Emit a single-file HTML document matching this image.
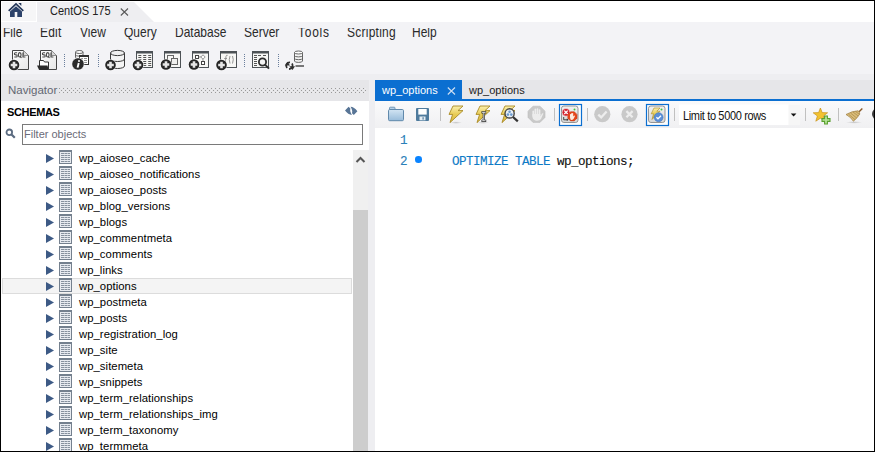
<!DOCTYPE html>
<html><head><meta charset="utf-8">
<style>
*{box-sizing:border-box;margin:0;padding:0}
html,body{width:875px;height:452px;overflow:hidden;background:#fff}
body{position:relative;font-family:"Liberation Sans",sans-serif}
.a{position:absolute}
.mn{position:absolute;top:-2px;font-size:12px;color:#2a2a2a;line-height:14px;transform:scaleY(1.2);transform-origin:0 11px}
.tt{font-size:11.3px;color:#000;white-space:nowrap;line-height:16px;letter-spacing:0.05px}
.mono{font-family:"Liberation Mono",monospace;font-size:12.6px;letter-spacing:-0.56px;line-height:14px;white-space:pre;-webkit-text-stroke:0.12px currentColor}
</style></head><body>
<!-- ===== top tab bar ===== -->
<div class="a" style="left:2px;top:2px;width:34px;height:19px;background:#f6f6f7"></div>
<svg class="a" style="left:0;top:0" width="40" height="21"><path d="M8.7,10.9 L16,3.9 L23.3,10.9" stroke="#233659" stroke-width="1.7" fill="none"/><polygon points="18.4,3.1 21.3,3.1 21.3,6" fill="#233659"/><polygon points="10,11.4 16,6.2 22,11.4 22,16.9 17.3,16.9 17.3,12.1 14.7,12.1 14.7,16.9 10,16.9" fill="#2c4269"/></svg>
<svg class="a" style="left:37px;top:2px" width="120" height="20"><polygon points="0,0 97,0 117,20 0,20" fill="#eeeef1"/></svg>
<div class="a" style="left:50px;top:4px;font-size:11px;color:#222;line-height:13px;transform:scaleY(1.1);transform-origin:0 0">CentOS 175</div>
<svg class="a" style="left:120px;top:8px" width="9" height="8"><path d="M0.8,0.5 L8,7.5 M8,0.5 L0.8,7.5" stroke="#5a5a5a" stroke-width="1.1"/></svg>

<!-- ===== menu + toolbar ===== -->
<div class="a" style="left:1px;top:22px;width:873px;height:52px;background:#f3f3f6"></div>
<div class="a" style="left:1px;top:74px;width:873px;height:6px;background:#eeeef1"></div>
<div class="a" style="left:0;top:28px;width:460px;height:14px;overflow:hidden"><span class="mn" style="left:3px">File</span><span class="mn" style="left:40px;letter-spacing:0.2px">Edit</span><span class="mn" style="left:80px">View</span><span class="mn" style="left:124px">Query</span><span class="mn" style="left:175px">Database</span><span class="mn" style="left:244px">Server</span><span class="mn" style="left:298px;letter-spacing:0.75px">Tools</span><span class="mn" style="left:347px;letter-spacing:0.25px">Scripting</span><span class="mn" style="left:412px">Help</span></div>

<svg class="a" style="left:0;top:40px" width="320" height="36" viewBox="0 40 320 36">
<defs>
<linearGradient id="docg" x1="0" y1="0" x2="1" y2="1"><stop offset="0" stop-color="#ffffff"/><stop offset="1" stop-color="#e6e6e6"/></linearGradient>
<g id="plus"><circle cx="0" cy="0" r="6" fill="#fff" opacity="0.6"/><circle cx="0" cy="0" r="5.3" fill="#262626"/><path d="M-3.3,0 H3.3 M0,-3.3 V3.3" stroke="#e6e6e6" stroke-width="2.6"/></g>
<g id="frame"><rect x="0.5" y="0.5" width="16" height="16" fill="#f7f7f5" stroke="#4d5256" stroke-width="1"/><rect x="0" y="0" width="17" height="2.5" fill="#4d5256"/></g>
</defs>
<!-- 1 new sql -->
<path d="M12.5,50.5 H23.5 L28.5,55.5 V69.5 H12.5 Z" fill="url(#docg)" stroke="#454545"/>
<path d="M23.5,50.5 V55.5 H28.5" fill="#d8d8d8" stroke="#777" stroke-width="0.8"/>
<g transform="translate(0,0)" fill="none" stroke="#4a4a4a" stroke-width="1.15"><path d="M17.1,52.7 H15.3 Q14.4,52.7 14.4,53.7 Q14.4,54.7 15.4,54.8 H16.2 Q17.2,54.9 17.2,55.9 Q17.2,57 16.2,57 H14.3"/><ellipse cx="19.7" cy="54.85" rx="1.35" ry="2.15"/><path d="M20.2,56.6 L21.5,57.8"/><path d="M23,52.4 V57 H25.4"/></g>
<use href="#plus" x="14" y="65"/>
<!-- 2 open sql -->
<path d="M40.5,50.5 H51.5 L56.5,55.5 V69.5 H40.5 Z" fill="url(#docg)" stroke="#454545"/>
<path d="M51.5,50.5 V55.5 H56.5" fill="#d8d8d8" stroke="#777" stroke-width="0.8"/>
<g transform="translate(28,0)" fill="none" stroke="#4a4a4a" stroke-width="1.15"><path d="M17.1,52.7 H15.3 Q14.4,52.7 14.4,53.7 Q14.4,54.7 15.4,54.8 H16.2 Q17.2,54.9 17.2,55.9 Q17.2,57 16.2,57 H14.3"/><ellipse cx="19.7" cy="54.85" rx="1.35" ry="2.15"/><path d="M20.2,56.6 L21.5,57.8"/><path d="M23,52.4 V57 H25.4"/></g>
<path d="M39.5,69.5 V60.5 H43.5 L44.5,62 H48.5 V69.5 Z" fill="#fff" stroke="#333"/>
<path d="M37,65.5 H47.5 L48.5,69.8 H39 Z" fill="#2a2a2a"/>
<!-- sep -->
<g fill="#6a7f9c"><rect x="64" y="54" width="1" height="1"/><rect x="64" y="56" width="1" height="1"/><rect x="64" y="58" width="1" height="1"/><rect x="64" y="60" width="1" height="1"/><rect x="64" y="62" width="1" height="1"/><rect x="64" y="64" width="1" height="1"/><rect x="64" y="66" width="1" height="1"/>
<rect x="98" y="54" width="1" height="1"/><rect x="98" y="56" width="1" height="1"/><rect x="98" y="58" width="1" height="1"/><rect x="98" y="60" width="1" height="1"/><rect x="98" y="62" width="1" height="1"/><rect x="98" y="64" width="1" height="1"/><rect x="98" y="66" width="1" height="1"/>
<rect x="244" y="54" width="1" height="1"/><rect x="244" y="56" width="1" height="1"/><rect x="244" y="58" width="1" height="1"/><rect x="244" y="60" width="1" height="1"/><rect x="244" y="62" width="1" height="1"/><rect x="244" y="64" width="1" height="1"/><rect x="244" y="66" width="1" height="1"/>
<rect x="278" y="54" width="1" height="1"/><rect x="278" y="56" width="1" height="1"/><rect x="278" y="58" width="1" height="1"/><rect x="278" y="60" width="1" height="1"/><rect x="278" y="62" width="1" height="1"/><rect x="278" y="64" width="1" height="1"/><rect x="278" y="66" width="1" height="1"/></g>
<!-- 3 info -->
<path d="M75.5,52 V57.5 A3.8,1.4 0 0 0 83,57.5 V52" fill="#fafafa" stroke="#555" stroke-width="0.9"/>
<ellipse cx="79.3" cy="52" rx="3.8" ry="1.5" fill="#fff" stroke="#555" stroke-width="0.9"/>
<path d="M75.5,55 A3.8,1.4 0 0 0 83,55" fill="none" stroke="#555" stroke-width="0.9"/>
<rect x="79.5" y="55.5" width="9" height="9" fill="#fff" stroke="#333"/>
<rect x="79.5" y="55.5" width="9" height="1.5" fill="#333"/>
<g fill="#777"><rect x="81" y="58" width="2" height="0.8"/><rect x="84" y="58" width="3" height="0.8"/><rect x="81" y="60" width="2" height="0.8"/><rect x="84" y="60" width="3" height="0.8"/><rect x="84" y="62" width="3" height="0.8"/></g>
<circle cx="78" cy="64" r="6.1" fill="#2b2b2b" stroke="#fff" stroke-width="0.5"/>
<circle cx="79" cy="60.9" r="1" fill="#fff"/><path d="M78.7,63 L77.6,67.6" stroke="#fff" stroke-width="1.9"/>
<!-- 4 db plus -->
<path d="M110.5,53 V66 A7,2.5 0 0 0 124.5,66 V53" fill="#f4f4f4" stroke="#3a3a3a" stroke-width="1"/>
<ellipse cx="117.5" cy="53" rx="7" ry="2.6" fill="#f0f0f0" stroke="#3a3a3a" stroke-width="1"/>
<path d="M110.5,59 A7,2.5 0 0 0 124.5,59" fill="none" stroke="#3a3a3a" stroke-width="1"/>
<path d="M110.5,62.5 H124.5" fill="none" stroke="#3a3a3a" stroke-width="0"/>
<use href="#plus" x="110.5" y="65"/>
<!-- 5 table plus -->
<use href="#frame" x="136" y="51"/>
<g fill="#555"><rect x="138.3" y="55" width="3" height="1"/><rect x="143.2" y="55" width="3" height="1"/><rect x="148.2" y="55" width="3" height="1"/><rect x="138.3" y="57" width="3" height="1"/><rect x="143.2" y="57" width="3" height="1"/><rect x="148.2" y="57" width="3" height="1"/><rect x="138.3" y="59" width="3" height="1"/><rect x="143.2" y="59" width="3" height="1"/><rect x="148.2" y="59" width="3" height="1"/><rect x="143.2" y="61" width="3" height="1"/><rect x="148.2" y="61" width="3" height="1"/><rect x="143.2" y="63" width="3" height="1"/><rect x="148.2" y="63" width="3" height="1"/><rect x="143.2" y="65" width="3" height="1"/><rect x="148.2" y="65" width="3" height="1"/></g>
<use href="#plus" x="138" y="65"/>
<!-- 6 view plus -->
<use href="#frame" x="164" y="51"/>
<rect x="167.5" y="55.5" width="6" height="6" fill="none" stroke="#666" stroke-width="1"/>
<rect x="171.5" y="58.5" width="6" height="6" fill="#f0f0ee" stroke="#666" stroke-width="1"/>
<use href="#plus" x="166" y="64.5"/>
<!-- 7 routine plus -->
<use href="#frame" x="192" y="51"/>
<rect x="195.5" y="55.5" width="3" height="3" fill="#fff" stroke="#444" stroke-width="1"/>
<path d="M198.5,57 H201" stroke="#777" stroke-width="0.8"/>
<path d="M203,54.8 L205.2,57 L203,59.2 L200.8,57 Z" fill="#fff" stroke="#777" stroke-width="0.8"/>
<path d="M203,59.2 V61" stroke="#777" stroke-width="0.8"/>
<rect x="201.5" y="61.5" width="3" height="3" fill="#fff" stroke="#444" stroke-width="1"/>
<use href="#plus" x="194" y="64.5"/>
<!-- 8 function plus -->
<use href="#frame" x="220" y="51"/>
<g fill="none" stroke="#8a8a8a" stroke-width="0.9"><path d="M227.6,55.3 Q226.3,54.8 226,56.4 L225.2,63.6 Q224.9,65 223.8,64.6 M224.2,58.5 H227"/><path d="M230,56 Q228.5,59.5 230,63.5"/><path d="M232.5,56 Q234,59.5 232.5,63.5"/></g>
<use href="#plus" x="221.5" y="65"/>
<!-- 9 search table -->
<use href="#frame" x="252" y="51"/>
<g fill="#555"><rect x="254" y="55" width="3" height="1"/><rect x="258" y="55" width="3" height="1"/><rect x="263" y="55" width="3" height="1"/><rect x="254" y="57" width="3" height="1"/><rect x="254" y="59" width="3" height="1"/><rect x="254" y="61" width="3" height="1"/><rect x="254" y="63" width="3" height="1"/><rect x="254" y="65" width="3" height="1"/></g>
<circle cx="262.5" cy="62" r="3.6" fill="#f5f5f5" stroke="#2e2e2e" stroke-width="1.8"/>
<path d="M265,64.6 L269,68.6" stroke="#2e2e2e" stroke-width="2"/>
<!-- 10 migration -->
<path d="M294.5,52.5 V61 A4,1.4 0 0 0 302.5,61 V52.5" fill="#f4f4f4" stroke="#555" stroke-width="0.9"/>
<ellipse cx="298.5" cy="52.5" rx="4" ry="1.5" fill="#fff" stroke="#555" stroke-width="0.9"/>
<path d="M294.5,55.5 A4,1.4 0 0 0 302.5,55.5 M294.5,58.3 A4,1.4 0 0 0 302.5,58.3" fill="none" stroke="#555" stroke-width="0.9"/>
<path d="M295.5,66 H304" stroke="#333" stroke-width="1.3"/>
<path d="M287,68 A3.5,3.5 0 0 1 290,62.3" fill="none" stroke="#2e2e2e" stroke-width="1.8"/>
<polygon points="284.8,65.5 287.5,61.8 290,65.5" fill="#2e2e2e"/>
<path d="M292,63.5 A3.5,3.5 0 0 1 289,69" fill="none" stroke="#2e2e2e" stroke-width="1.8"/>
<polygon points="289.3,66.2 292.5,70 295,66.2" fill="#2e2e2e"/>
</svg>


<!-- ===== navigator ===== -->
<div class="a" style="left:1px;top:80px;width:368px;height:21px;background:#e6e6e9"></div>
<div class="a" style="left:8px;top:83px;font-size:11.5px;color:#636772;line-height:14px">Navigator</div>
<svg class="a" style="left:59px;top:88px" width="307" height="5"><defs><pattern id="dots" width="4" height="4" patternUnits="userSpaceOnUse"><rect x="0" y="0" width="1" height="1" fill="#9a9a9a"/><rect x="2" y="2" width="1" height="1" fill="#9a9a9a"/><rect x="2" y="0" width="1" height="1" fill="#ededef"/><rect x="0" y="2" width="1" height="1" fill="#ededef"/></pattern></defs><rect width="307" height="5" fill="url(#dots)"/></svg>

<div class="a" style="left:1px;top:101px;width:368px;height:350px;background:#fff"></div>
<div class="a" style="left:7px;top:105px;font-size:11px;font-weight:bold;color:#000;line-height:14px;letter-spacing:-0.35px">SCHEMAS</div>
<svg class="a" style="left:340px;top:100px" width="22" height="20" viewBox="340 100 22 20"><g fill="#587596"><path d="M345,110.6 L348.6,106.7 L350.4,108.6 Q349.5,111.2 351.9,115 Q348.2,114.8 345,110.6 Z"/><path d="M345,110.6 L348.6,106.7 L350.4,108.6 Q349.5,111.2 351.9,115 Q348.2,114.8 345,110.6 Z" transform="rotate(180 351.2 110.9)"/></g></svg>
<svg class="a" style="left:5px;top:128px" width="11" height="11"><circle cx="4.3" cy="4.3" r="2.8" stroke="#5b6b80" stroke-width="1.8" fill="none"/><path d="M6.5,6.5 L9.8,9.8" stroke="#5b6b80" stroke-width="2.2"/></svg>
<div class="a" style="left:22px;top:124px;width:341px;height:21px;border:1px solid #7a7a7a;background:#fff"></div>
<div class="a" style="left:24px;top:127px;font-size:11px;color:#6b6b78;line-height:14px">Filter objects</div>

<svg class="a" style="left:45px;top:153px" width="10" height="11"><polygon points="1,1 9,5.5 1,10" fill="#3d5a85"/></svg>
<svg class="a" style="left:59px;top:150px" width="13" height="14" viewBox="0 0 13 14"><rect x="0" y="0" width="13" height="14" fill="#74808e"/><rect x="1" y="2" width="11" height="11" fill="#e8ebf0"/><g fill="#87919e"><rect x="2" y="3" width="3" height="1"/><rect x="5.5" y="3" width="2.5" height="1"/><rect x="8.5" y="3" width="2.5" height="1"/><rect x="2" y="5" width="3" height="1"/><rect x="5.5" y="5" width="2.5" height="1"/><rect x="8.5" y="5" width="2.5" height="1"/><rect x="2" y="7" width="3" height="1"/><rect x="5.5" y="7" width="2.5" height="1"/><rect x="8.5" y="7" width="2.5" height="1"/><rect x="2" y="9" width="3" height="1"/><rect x="5.5" y="9" width="2.5" height="1"/><rect x="8.5" y="9" width="2.5" height="1"/><rect x="2" y="11" width="3" height="1"/><rect x="5.5" y="11" width="2.5" height="1"/><rect x="8.5" y="11" width="2.5" height="1"/></g></svg>
<div class="a tt" style="left:79px;top:150px">wp_aioseo_cache</div>
<svg class="a" style="left:45px;top:169px" width="10" height="11"><polygon points="1,1 9,5.5 1,10" fill="#3d5a85"/></svg>
<svg class="a" style="left:59px;top:166px" width="13" height="14" viewBox="0 0 13 14"><rect x="0" y="0" width="13" height="14" fill="#74808e"/><rect x="1" y="2" width="11" height="11" fill="#e8ebf0"/><g fill="#87919e"><rect x="2" y="3" width="3" height="1"/><rect x="5.5" y="3" width="2.5" height="1"/><rect x="8.5" y="3" width="2.5" height="1"/><rect x="2" y="5" width="3" height="1"/><rect x="5.5" y="5" width="2.5" height="1"/><rect x="8.5" y="5" width="2.5" height="1"/><rect x="2" y="7" width="3" height="1"/><rect x="5.5" y="7" width="2.5" height="1"/><rect x="8.5" y="7" width="2.5" height="1"/><rect x="2" y="9" width="3" height="1"/><rect x="5.5" y="9" width="2.5" height="1"/><rect x="8.5" y="9" width="2.5" height="1"/><rect x="2" y="11" width="3" height="1"/><rect x="5.5" y="11" width="2.5" height="1"/><rect x="8.5" y="11" width="2.5" height="1"/></g></svg>
<div class="a tt" style="left:79px;top:166px">wp_aioseo_notifications</div>
<svg class="a" style="left:45px;top:185px" width="10" height="11"><polygon points="1,1 9,5.5 1,10" fill="#3d5a85"/></svg>
<svg class="a" style="left:59px;top:182px" width="13" height="14" viewBox="0 0 13 14"><rect x="0" y="0" width="13" height="14" fill="#74808e"/><rect x="1" y="2" width="11" height="11" fill="#e8ebf0"/><g fill="#87919e"><rect x="2" y="3" width="3" height="1"/><rect x="5.5" y="3" width="2.5" height="1"/><rect x="8.5" y="3" width="2.5" height="1"/><rect x="2" y="5" width="3" height="1"/><rect x="5.5" y="5" width="2.5" height="1"/><rect x="8.5" y="5" width="2.5" height="1"/><rect x="2" y="7" width="3" height="1"/><rect x="5.5" y="7" width="2.5" height="1"/><rect x="8.5" y="7" width="2.5" height="1"/><rect x="2" y="9" width="3" height="1"/><rect x="5.5" y="9" width="2.5" height="1"/><rect x="8.5" y="9" width="2.5" height="1"/><rect x="2" y="11" width="3" height="1"/><rect x="5.5" y="11" width="2.5" height="1"/><rect x="8.5" y="11" width="2.5" height="1"/></g></svg>
<div class="a tt" style="left:79px;top:182px">wp_aioseo_posts</div>
<svg class="a" style="left:45px;top:201px" width="10" height="11"><polygon points="1,1 9,5.5 1,10" fill="#3d5a85"/></svg>
<svg class="a" style="left:59px;top:198px" width="13" height="14" viewBox="0 0 13 14"><rect x="0" y="0" width="13" height="14" fill="#74808e"/><rect x="1" y="2" width="11" height="11" fill="#e8ebf0"/><g fill="#87919e"><rect x="2" y="3" width="3" height="1"/><rect x="5.5" y="3" width="2.5" height="1"/><rect x="8.5" y="3" width="2.5" height="1"/><rect x="2" y="5" width="3" height="1"/><rect x="5.5" y="5" width="2.5" height="1"/><rect x="8.5" y="5" width="2.5" height="1"/><rect x="2" y="7" width="3" height="1"/><rect x="5.5" y="7" width="2.5" height="1"/><rect x="8.5" y="7" width="2.5" height="1"/><rect x="2" y="9" width="3" height="1"/><rect x="5.5" y="9" width="2.5" height="1"/><rect x="8.5" y="9" width="2.5" height="1"/><rect x="2" y="11" width="3" height="1"/><rect x="5.5" y="11" width="2.5" height="1"/><rect x="8.5" y="11" width="2.5" height="1"/></g></svg>
<div class="a tt" style="left:79px;top:198px">wp_blog_versions</div>
<svg class="a" style="left:45px;top:217px" width="10" height="11"><polygon points="1,1 9,5.5 1,10" fill="#3d5a85"/></svg>
<svg class="a" style="left:59px;top:214px" width="13" height="14" viewBox="0 0 13 14"><rect x="0" y="0" width="13" height="14" fill="#74808e"/><rect x="1" y="2" width="11" height="11" fill="#e8ebf0"/><g fill="#87919e"><rect x="2" y="3" width="3" height="1"/><rect x="5.5" y="3" width="2.5" height="1"/><rect x="8.5" y="3" width="2.5" height="1"/><rect x="2" y="5" width="3" height="1"/><rect x="5.5" y="5" width="2.5" height="1"/><rect x="8.5" y="5" width="2.5" height="1"/><rect x="2" y="7" width="3" height="1"/><rect x="5.5" y="7" width="2.5" height="1"/><rect x="8.5" y="7" width="2.5" height="1"/><rect x="2" y="9" width="3" height="1"/><rect x="5.5" y="9" width="2.5" height="1"/><rect x="8.5" y="9" width="2.5" height="1"/><rect x="2" y="11" width="3" height="1"/><rect x="5.5" y="11" width="2.5" height="1"/><rect x="8.5" y="11" width="2.5" height="1"/></g></svg>
<div class="a tt" style="left:79px;top:214px">wp_blogs</div>
<svg class="a" style="left:45px;top:233px" width="10" height="11"><polygon points="1,1 9,5.5 1,10" fill="#3d5a85"/></svg>
<svg class="a" style="left:59px;top:230px" width="13" height="14" viewBox="0 0 13 14"><rect x="0" y="0" width="13" height="14" fill="#74808e"/><rect x="1" y="2" width="11" height="11" fill="#e8ebf0"/><g fill="#87919e"><rect x="2" y="3" width="3" height="1"/><rect x="5.5" y="3" width="2.5" height="1"/><rect x="8.5" y="3" width="2.5" height="1"/><rect x="2" y="5" width="3" height="1"/><rect x="5.5" y="5" width="2.5" height="1"/><rect x="8.5" y="5" width="2.5" height="1"/><rect x="2" y="7" width="3" height="1"/><rect x="5.5" y="7" width="2.5" height="1"/><rect x="8.5" y="7" width="2.5" height="1"/><rect x="2" y="9" width="3" height="1"/><rect x="5.5" y="9" width="2.5" height="1"/><rect x="8.5" y="9" width="2.5" height="1"/><rect x="2" y="11" width="3" height="1"/><rect x="5.5" y="11" width="2.5" height="1"/><rect x="8.5" y="11" width="2.5" height="1"/></g></svg>
<div class="a tt" style="left:79px;top:230px">wp_commentmeta</div>
<svg class="a" style="left:45px;top:249px" width="10" height="11"><polygon points="1,1 9,5.5 1,10" fill="#3d5a85"/></svg>
<svg class="a" style="left:59px;top:246px" width="13" height="14" viewBox="0 0 13 14"><rect x="0" y="0" width="13" height="14" fill="#74808e"/><rect x="1" y="2" width="11" height="11" fill="#e8ebf0"/><g fill="#87919e"><rect x="2" y="3" width="3" height="1"/><rect x="5.5" y="3" width="2.5" height="1"/><rect x="8.5" y="3" width="2.5" height="1"/><rect x="2" y="5" width="3" height="1"/><rect x="5.5" y="5" width="2.5" height="1"/><rect x="8.5" y="5" width="2.5" height="1"/><rect x="2" y="7" width="3" height="1"/><rect x="5.5" y="7" width="2.5" height="1"/><rect x="8.5" y="7" width="2.5" height="1"/><rect x="2" y="9" width="3" height="1"/><rect x="5.5" y="9" width="2.5" height="1"/><rect x="8.5" y="9" width="2.5" height="1"/><rect x="2" y="11" width="3" height="1"/><rect x="5.5" y="11" width="2.5" height="1"/><rect x="8.5" y="11" width="2.5" height="1"/></g></svg>
<div class="a tt" style="left:79px;top:246px">wp_comments</div>
<svg class="a" style="left:45px;top:265px" width="10" height="11"><polygon points="1,1 9,5.5 1,10" fill="#3d5a85"/></svg>
<svg class="a" style="left:59px;top:262px" width="13" height="14" viewBox="0 0 13 14"><rect x="0" y="0" width="13" height="14" fill="#74808e"/><rect x="1" y="2" width="11" height="11" fill="#e8ebf0"/><g fill="#87919e"><rect x="2" y="3" width="3" height="1"/><rect x="5.5" y="3" width="2.5" height="1"/><rect x="8.5" y="3" width="2.5" height="1"/><rect x="2" y="5" width="3" height="1"/><rect x="5.5" y="5" width="2.5" height="1"/><rect x="8.5" y="5" width="2.5" height="1"/><rect x="2" y="7" width="3" height="1"/><rect x="5.5" y="7" width="2.5" height="1"/><rect x="8.5" y="7" width="2.5" height="1"/><rect x="2" y="9" width="3" height="1"/><rect x="5.5" y="9" width="2.5" height="1"/><rect x="8.5" y="9" width="2.5" height="1"/><rect x="2" y="11" width="3" height="1"/><rect x="5.5" y="11" width="2.5" height="1"/><rect x="8.5" y="11" width="2.5" height="1"/></g></svg>
<div class="a tt" style="left:79px;top:262px">wp_links</div>
<div class="a" style="left:2px;top:278px;width:350px;height:16px;background:#f4f4f4;border:1px solid #dcdcdc"></div>
<svg class="a" style="left:45px;top:281px" width="10" height="11"><polygon points="1,1 9,5.5 1,10" fill="#3d5a85"/></svg>
<svg class="a" style="left:59px;top:278px" width="13" height="14" viewBox="0 0 13 14"><rect x="0" y="0" width="13" height="14" fill="#74808e"/><rect x="1" y="2" width="11" height="11" fill="#e8ebf0"/><g fill="#87919e"><rect x="2" y="3" width="3" height="1"/><rect x="5.5" y="3" width="2.5" height="1"/><rect x="8.5" y="3" width="2.5" height="1"/><rect x="2" y="5" width="3" height="1"/><rect x="5.5" y="5" width="2.5" height="1"/><rect x="8.5" y="5" width="2.5" height="1"/><rect x="2" y="7" width="3" height="1"/><rect x="5.5" y="7" width="2.5" height="1"/><rect x="8.5" y="7" width="2.5" height="1"/><rect x="2" y="9" width="3" height="1"/><rect x="5.5" y="9" width="2.5" height="1"/><rect x="8.5" y="9" width="2.5" height="1"/><rect x="2" y="11" width="3" height="1"/><rect x="5.5" y="11" width="2.5" height="1"/><rect x="8.5" y="11" width="2.5" height="1"/></g></svg>
<div class="a tt" style="left:79px;top:278px">wp_options</div>
<svg class="a" style="left:45px;top:297px" width="10" height="11"><polygon points="1,1 9,5.5 1,10" fill="#3d5a85"/></svg>
<svg class="a" style="left:59px;top:294px" width="13" height="14" viewBox="0 0 13 14"><rect x="0" y="0" width="13" height="14" fill="#74808e"/><rect x="1" y="2" width="11" height="11" fill="#e8ebf0"/><g fill="#87919e"><rect x="2" y="3" width="3" height="1"/><rect x="5.5" y="3" width="2.5" height="1"/><rect x="8.5" y="3" width="2.5" height="1"/><rect x="2" y="5" width="3" height="1"/><rect x="5.5" y="5" width="2.5" height="1"/><rect x="8.5" y="5" width="2.5" height="1"/><rect x="2" y="7" width="3" height="1"/><rect x="5.5" y="7" width="2.5" height="1"/><rect x="8.5" y="7" width="2.5" height="1"/><rect x="2" y="9" width="3" height="1"/><rect x="5.5" y="9" width="2.5" height="1"/><rect x="8.5" y="9" width="2.5" height="1"/><rect x="2" y="11" width="3" height="1"/><rect x="5.5" y="11" width="2.5" height="1"/><rect x="8.5" y="11" width="2.5" height="1"/></g></svg>
<div class="a tt" style="left:79px;top:294px">wp_postmeta</div>
<svg class="a" style="left:45px;top:313px" width="10" height="11"><polygon points="1,1 9,5.5 1,10" fill="#3d5a85"/></svg>
<svg class="a" style="left:59px;top:310px" width="13" height="14" viewBox="0 0 13 14"><rect x="0" y="0" width="13" height="14" fill="#74808e"/><rect x="1" y="2" width="11" height="11" fill="#e8ebf0"/><g fill="#87919e"><rect x="2" y="3" width="3" height="1"/><rect x="5.5" y="3" width="2.5" height="1"/><rect x="8.5" y="3" width="2.5" height="1"/><rect x="2" y="5" width="3" height="1"/><rect x="5.5" y="5" width="2.5" height="1"/><rect x="8.5" y="5" width="2.5" height="1"/><rect x="2" y="7" width="3" height="1"/><rect x="5.5" y="7" width="2.5" height="1"/><rect x="8.5" y="7" width="2.5" height="1"/><rect x="2" y="9" width="3" height="1"/><rect x="5.5" y="9" width="2.5" height="1"/><rect x="8.5" y="9" width="2.5" height="1"/><rect x="2" y="11" width="3" height="1"/><rect x="5.5" y="11" width="2.5" height="1"/><rect x="8.5" y="11" width="2.5" height="1"/></g></svg>
<div class="a tt" style="left:79px;top:310px">wp_posts</div>
<svg class="a" style="left:45px;top:329px" width="10" height="11"><polygon points="1,1 9,5.5 1,10" fill="#3d5a85"/></svg>
<svg class="a" style="left:59px;top:326px" width="13" height="14" viewBox="0 0 13 14"><rect x="0" y="0" width="13" height="14" fill="#74808e"/><rect x="1" y="2" width="11" height="11" fill="#e8ebf0"/><g fill="#87919e"><rect x="2" y="3" width="3" height="1"/><rect x="5.5" y="3" width="2.5" height="1"/><rect x="8.5" y="3" width="2.5" height="1"/><rect x="2" y="5" width="3" height="1"/><rect x="5.5" y="5" width="2.5" height="1"/><rect x="8.5" y="5" width="2.5" height="1"/><rect x="2" y="7" width="3" height="1"/><rect x="5.5" y="7" width="2.5" height="1"/><rect x="8.5" y="7" width="2.5" height="1"/><rect x="2" y="9" width="3" height="1"/><rect x="5.5" y="9" width="2.5" height="1"/><rect x="8.5" y="9" width="2.5" height="1"/><rect x="2" y="11" width="3" height="1"/><rect x="5.5" y="11" width="2.5" height="1"/><rect x="8.5" y="11" width="2.5" height="1"/></g></svg>
<div class="a tt" style="left:79px;top:326px">wp_registration_log</div>
<svg class="a" style="left:45px;top:345px" width="10" height="11"><polygon points="1,1 9,5.5 1,10" fill="#3d5a85"/></svg>
<svg class="a" style="left:59px;top:342px" width="13" height="14" viewBox="0 0 13 14"><rect x="0" y="0" width="13" height="14" fill="#74808e"/><rect x="1" y="2" width="11" height="11" fill="#e8ebf0"/><g fill="#87919e"><rect x="2" y="3" width="3" height="1"/><rect x="5.5" y="3" width="2.5" height="1"/><rect x="8.5" y="3" width="2.5" height="1"/><rect x="2" y="5" width="3" height="1"/><rect x="5.5" y="5" width="2.5" height="1"/><rect x="8.5" y="5" width="2.5" height="1"/><rect x="2" y="7" width="3" height="1"/><rect x="5.5" y="7" width="2.5" height="1"/><rect x="8.5" y="7" width="2.5" height="1"/><rect x="2" y="9" width="3" height="1"/><rect x="5.5" y="9" width="2.5" height="1"/><rect x="8.5" y="9" width="2.5" height="1"/><rect x="2" y="11" width="3" height="1"/><rect x="5.5" y="11" width="2.5" height="1"/><rect x="8.5" y="11" width="2.5" height="1"/></g></svg>
<div class="a tt" style="left:79px;top:342px">wp_site</div>
<svg class="a" style="left:45px;top:361px" width="10" height="11"><polygon points="1,1 9,5.5 1,10" fill="#3d5a85"/></svg>
<svg class="a" style="left:59px;top:358px" width="13" height="14" viewBox="0 0 13 14"><rect x="0" y="0" width="13" height="14" fill="#74808e"/><rect x="1" y="2" width="11" height="11" fill="#e8ebf0"/><g fill="#87919e"><rect x="2" y="3" width="3" height="1"/><rect x="5.5" y="3" width="2.5" height="1"/><rect x="8.5" y="3" width="2.5" height="1"/><rect x="2" y="5" width="3" height="1"/><rect x="5.5" y="5" width="2.5" height="1"/><rect x="8.5" y="5" width="2.5" height="1"/><rect x="2" y="7" width="3" height="1"/><rect x="5.5" y="7" width="2.5" height="1"/><rect x="8.5" y="7" width="2.5" height="1"/><rect x="2" y="9" width="3" height="1"/><rect x="5.5" y="9" width="2.5" height="1"/><rect x="8.5" y="9" width="2.5" height="1"/><rect x="2" y="11" width="3" height="1"/><rect x="5.5" y="11" width="2.5" height="1"/><rect x="8.5" y="11" width="2.5" height="1"/></g></svg>
<div class="a tt" style="left:79px;top:358px">wp_sitemeta</div>
<svg class="a" style="left:45px;top:377px" width="10" height="11"><polygon points="1,1 9,5.5 1,10" fill="#3d5a85"/></svg>
<svg class="a" style="left:59px;top:374px" width="13" height="14" viewBox="0 0 13 14"><rect x="0" y="0" width="13" height="14" fill="#74808e"/><rect x="1" y="2" width="11" height="11" fill="#e8ebf0"/><g fill="#87919e"><rect x="2" y="3" width="3" height="1"/><rect x="5.5" y="3" width="2.5" height="1"/><rect x="8.5" y="3" width="2.5" height="1"/><rect x="2" y="5" width="3" height="1"/><rect x="5.5" y="5" width="2.5" height="1"/><rect x="8.5" y="5" width="2.5" height="1"/><rect x="2" y="7" width="3" height="1"/><rect x="5.5" y="7" width="2.5" height="1"/><rect x="8.5" y="7" width="2.5" height="1"/><rect x="2" y="9" width="3" height="1"/><rect x="5.5" y="9" width="2.5" height="1"/><rect x="8.5" y="9" width="2.5" height="1"/><rect x="2" y="11" width="3" height="1"/><rect x="5.5" y="11" width="2.5" height="1"/><rect x="8.5" y="11" width="2.5" height="1"/></g></svg>
<div class="a tt" style="left:79px;top:374px">wp_snippets</div>
<svg class="a" style="left:45px;top:393px" width="10" height="11"><polygon points="1,1 9,5.5 1,10" fill="#3d5a85"/></svg>
<svg class="a" style="left:59px;top:390px" width="13" height="14" viewBox="0 0 13 14"><rect x="0" y="0" width="13" height="14" fill="#74808e"/><rect x="1" y="2" width="11" height="11" fill="#e8ebf0"/><g fill="#87919e"><rect x="2" y="3" width="3" height="1"/><rect x="5.5" y="3" width="2.5" height="1"/><rect x="8.5" y="3" width="2.5" height="1"/><rect x="2" y="5" width="3" height="1"/><rect x="5.5" y="5" width="2.5" height="1"/><rect x="8.5" y="5" width="2.5" height="1"/><rect x="2" y="7" width="3" height="1"/><rect x="5.5" y="7" width="2.5" height="1"/><rect x="8.5" y="7" width="2.5" height="1"/><rect x="2" y="9" width="3" height="1"/><rect x="5.5" y="9" width="2.5" height="1"/><rect x="8.5" y="9" width="2.5" height="1"/><rect x="2" y="11" width="3" height="1"/><rect x="5.5" y="11" width="2.5" height="1"/><rect x="8.5" y="11" width="2.5" height="1"/></g></svg>
<div class="a tt" style="left:79px;top:390px">wp_term_relationships</div>
<svg class="a" style="left:45px;top:409px" width="10" height="11"><polygon points="1,1 9,5.5 1,10" fill="#3d5a85"/></svg>
<svg class="a" style="left:59px;top:406px" width="13" height="14" viewBox="0 0 13 14"><rect x="0" y="0" width="13" height="14" fill="#74808e"/><rect x="1" y="2" width="11" height="11" fill="#e8ebf0"/><g fill="#87919e"><rect x="2" y="3" width="3" height="1"/><rect x="5.5" y="3" width="2.5" height="1"/><rect x="8.5" y="3" width="2.5" height="1"/><rect x="2" y="5" width="3" height="1"/><rect x="5.5" y="5" width="2.5" height="1"/><rect x="8.5" y="5" width="2.5" height="1"/><rect x="2" y="7" width="3" height="1"/><rect x="5.5" y="7" width="2.5" height="1"/><rect x="8.5" y="7" width="2.5" height="1"/><rect x="2" y="9" width="3" height="1"/><rect x="5.5" y="9" width="2.5" height="1"/><rect x="8.5" y="9" width="2.5" height="1"/><rect x="2" y="11" width="3" height="1"/><rect x="5.5" y="11" width="2.5" height="1"/><rect x="8.5" y="11" width="2.5" height="1"/></g></svg>
<div class="a tt" style="left:79px;top:406px">wp_term_relationships_img</div>
<svg class="a" style="left:45px;top:425px" width="10" height="11"><polygon points="1,1 9,5.5 1,10" fill="#3d5a85"/></svg>
<svg class="a" style="left:59px;top:422px" width="13" height="14" viewBox="0 0 13 14"><rect x="0" y="0" width="13" height="14" fill="#74808e"/><rect x="1" y="2" width="11" height="11" fill="#e8ebf0"/><g fill="#87919e"><rect x="2" y="3" width="3" height="1"/><rect x="5.5" y="3" width="2.5" height="1"/><rect x="8.5" y="3" width="2.5" height="1"/><rect x="2" y="5" width="3" height="1"/><rect x="5.5" y="5" width="2.5" height="1"/><rect x="8.5" y="5" width="2.5" height="1"/><rect x="2" y="7" width="3" height="1"/><rect x="5.5" y="7" width="2.5" height="1"/><rect x="8.5" y="7" width="2.5" height="1"/><rect x="2" y="9" width="3" height="1"/><rect x="5.5" y="9" width="2.5" height="1"/><rect x="8.5" y="9" width="2.5" height="1"/><rect x="2" y="11" width="3" height="1"/><rect x="5.5" y="11" width="2.5" height="1"/><rect x="8.5" y="11" width="2.5" height="1"/></g></svg>
<div class="a tt" style="left:79px;top:422px">wp_term_taxonomy</div>
<svg class="a" style="left:45px;top:441px" width="10" height="11"><polygon points="1,1 9,5.5 1,10" fill="#3d5a85"/></svg>
<svg class="a" style="left:59px;top:438px" width="13" height="14" viewBox="0 0 13 14"><rect x="0" y="0" width="13" height="14" fill="#74808e"/><rect x="1" y="2" width="11" height="11" fill="#e8ebf0"/><g fill="#87919e"><rect x="2" y="3" width="3" height="1"/><rect x="5.5" y="3" width="2.5" height="1"/><rect x="8.5" y="3" width="2.5" height="1"/><rect x="2" y="5" width="3" height="1"/><rect x="5.5" y="5" width="2.5" height="1"/><rect x="8.5" y="5" width="2.5" height="1"/><rect x="2" y="7" width="3" height="1"/><rect x="5.5" y="7" width="2.5" height="1"/><rect x="8.5" y="7" width="2.5" height="1"/><rect x="2" y="9" width="3" height="1"/><rect x="5.5" y="9" width="2.5" height="1"/><rect x="8.5" y="9" width="2.5" height="1"/><rect x="2" y="11" width="3" height="1"/><rect x="5.5" y="11" width="2.5" height="1"/><rect x="8.5" y="11" width="2.5" height="1"/></g></svg>
<div class="a tt" style="left:79px;top:438px">wp_termmeta</div>

<!-- scrollbar -->
<div class="a" style="left:353px;top:150px;width:15px;height:301px;background:#f0f0f0"></div>
<svg class="a" style="left:354px;top:156px" width="13" height="8"><path d="M2.5,6 L6.5,2 L10.5,6" stroke="#555" stroke-width="2" fill="none"/></svg>
<div class="a" style="left:353px;top:210px;width:15px;height:241px;background:#cdcdcd"></div>

<!-- splitter -->
<div class="a" style="left:369px;top:80px;width:6px;height:371px;background:#eeeef1"></div><div class="a" style="left:368px;top:150px;width:1px;height:301px;background:#eeeef1"></div>

<!-- ===== right tabs ===== -->
<div class="a" style="left:375px;top:80px;width:499px;height:19px;background:#e6e6e9"></div>
<div class="a" style="left:375px;top:80px;width:87px;height:19px;background:#0b6fd1"></div>
<div class="a" style="left:382px;top:83px;font-size:11px;color:#fff;line-height:14px">wp_options</div>
<svg class="a" style="left:447px;top:87px" width="9" height="8"><path d="M0.8,0.5 L8,7.5 M8,0.5 L0.8,7.5" stroke="#cfe0f3" stroke-width="1.1"/></svg>
<div class="a" style="left:469px;top:83px;font-size:11px;color:#222;line-height:14px">wp_options</div>
<div class="a" style="left:375px;top:99px;width:499px;height:2px;background:#0b6fd1"></div>

<!-- editor toolbar -->
<div class="a" style="left:375px;top:101px;width:499px;height:27px;background:linear-gradient(#fafafb,#f0f0f2)"></div>

<svg class="a" style="left:375px;top:101px" width="499" height="27" viewBox="375 101 499 27">
<defs>
<linearGradient id="fold" x1="0" y1="0" x2="0" y2="1"><stop offset="0" stop-color="#d2e4f3"/><stop offset="1" stop-color="#98bcda"/></linearGradient>
<linearGradient id="bolt" x1="0" y1="0" x2="0" y2="1"><stop offset="0" stop-color="#fbf0b0"/><stop offset="0.5" stop-color="#e8cc55"/><stop offset="1" stop-color="#d9b640"/></linearGradient>
<linearGradient id="btn" x1="0" y1="0" x2="0" y2="1"><stop offset="0" stop-color="#f2f2f2"/><stop offset="1" stop-color="#d6d6d6"/></linearGradient>
<radialGradient id="sh"><stop offset="0" stop-color="#000" stop-opacity="0.18"/><stop offset="1" stop-color="#000" stop-opacity="0"/></radialGradient>
<path id="boltp" d="M4,0 H14 L9,4.6 H14 L1,16.6 L3.6,8.4 H0 Z"/>
</defs>
<!-- folder -->
<path d="M389.5,109.5 V108 Q389.5,107.2 390.3,107.2 H394.2 Q395,107.2 395,108 V109.5 Z" fill="#b5d0e8" stroke="#6a90b0" stroke-width="0.9"/>
<rect x="388.5" y="109.5" width="15" height="11.2" rx="1.2" fill="url(#fold)" stroke="#6189ab" stroke-width="1"/>
<!-- save -->
<rect x="416" y="108" width="13" height="13" rx="1" fill="#4f7b9d"/>
<rect x="418.3" y="109" width="8.4" height="5.6" fill="#fff"/>
<rect x="419.5" y="116.5" width="6" height="3.8" fill="#e6eef4"/>
<rect x="422.5" y="117.2" width="1.2" height="2.4" fill="#4f7b9d"/>
<!-- seps -->
<g fill="#c0c0c0"><rect x="440" y="108" width="1" height="13"/><rect x="554" y="108" width="1" height="13"/><rect x="587" y="108" width="1" height="13"/><rect x="674" y="108" width="1" height="13"/><rect x="805" y="108" width="1" height="13"/><rect x="838" y="108" width="1" height="13"/></g>
<!-- bolt 1 -->
<ellipse cx="456" cy="122.6" rx="6" ry="1.3" fill="url(#sh)"/>
<use href="#boltp" x="449" y="106" fill="url(#bolt)" stroke="#a98a24" stroke-width="0.9"/>
<!-- bolt 2 with cursor -->
<ellipse cx="483" cy="122.6" rx="6" ry="1.3" fill="url(#sh)"/>
<use href="#boltp" x="476" y="106" fill="url(#bolt)" stroke="#a98a24" stroke-width="0.9"/>
<path d="M481.5,112.3 H486.2 M483.85,112.3 V120.8 M481.5,120.8 H486.2" stroke="#222" stroke-width="2.2"/>
<path d="M482,112.3 H485.7 M483.85,112.3 V120.8 M482,120.8 H485.7" stroke="#f4f4f4" stroke-width="0.9"/>
<!-- explain -->
<use href="#boltp" x="501" y="106" fill="url(#bolt)" stroke="#a98a24" stroke-width="0.9"/>
<circle cx="509.6" cy="113.4" r="4.6" fill="#e8eef4" stroke="#444" stroke-width="1.4"/>
<circle cx="509.6" cy="111.8" r="1.3" fill="#6b9bd0"/><circle cx="507.9" cy="114.6" r="1.3" fill="#6b9bd0"/><circle cx="511.3" cy="114.6" r="1.3" fill="#6b9bd0"/>
<path d="M513,117 L517.8,121.4" stroke="#333" stroke-width="2.2"/>
<!-- stop disabled -->
<polygon points="533,106.2 540,106.2 545,111.2 545,117.4 540,122.4 533,122.4 528,117.4 528,111.2" fill="#c9c9c9" stroke="#bdbdbd" stroke-width="0.6"/>
<g fill="#ececec"><rect x="532.4" y="110.6" width="1.7" height="6" rx="0.85"/><rect x="534.5" y="108.6" width="1.7" height="7" rx="0.85"/><rect x="536.6" y="108.2" width="1.7" height="7" rx="0.85"/><rect x="538.7" y="109.2" width="1.7" height="6.5" rx="0.85"/><path d="M532.4,114 H540.4 V116.5 L542,113.6 Q542.8,112.8 543.4,113.6 L541,119 Q540,120.8 537,120.8 Q533.2,120.8 532.4,117 Z"/></g>
<!-- toggle button 1 -->
<rect x="559.5" y="104.5" width="22" height="21" fill="#fdfdfd" stroke="#0b6fd1" stroke-width="1.2"/>
<rect x="561.5" y="106" width="16.5" height="16.5" rx="2.4" fill="url(#btn)" stroke="#8a8a8a" stroke-width="0.9"/>
<circle cx="574.5" cy="109.5" r="1" fill="#3ec43e"/>
<path d="M563.7,117 V119.8 H567.4" fill="none" stroke="#333" stroke-width="0.9"/>
<polygon points="566.8,118.5 568.6,119.8 566.8,121.1" fill="#333"/>
<circle cx="566" cy="112.3" r="3.9" fill="#d2202e" stroke="#fff" stroke-width="0.5"/>
<path d="M564.3,110.6 L567.7,114 M567.7,110.6 L564.3,114" stroke="#fff" stroke-width="1.3"/>
<polygon points="570.5,111.7 574.3,111.7 577,114.4 577,118.2 574.3,120.9 570.5,120.9 567.8,118.2 567.8,114.4" fill="#e5461a" stroke="#c3381a" stroke-width="0.5"/>
<path d="M570.5,119.4 Q569.8,117.5 570,115.8 V114.2 Q570.6,113.7 571,114.2 V113.5 Q571.6,113 572.1,113.5 V113.3 Q572.7,112.8 573.2,113.3 V116.5 L574.2,115.6 Q575,115.5 574.9,116.3 L573.5,119 Q572.6,120 571.5,120 Z" fill="#fdebe0"/>
<!-- check disabled -->
<circle cx="602.3" cy="114.2" r="8.1" fill="#c9c9c9"/>
<path d="M598.3,114.6 L601.2,117.4 L606.6,111.4" stroke="#ededed" stroke-width="2.3" fill="none"/>
<!-- x disabled -->
<circle cx="629.5" cy="114.2" r="8.1" fill="#c9c9c9"/>
<path d="M626.4,111.1 L632.6,117.3 M632.6,111.1 L626.4,117.3" stroke="#ededed" stroke-width="2.2"/>
<!-- toggle button 2 -->
<rect x="646.5" y="104.5" width="22" height="21" fill="#fdfdfd" stroke="#0b6fd1" stroke-width="1.2"/>
<rect x="648.5" y="106" width="16.5" height="16.5" rx="2.4" fill="url(#btn)" stroke="#8a8a8a" stroke-width="0.9"/>
<circle cx="661.5" cy="109.5" r="1" fill="#3ec43e"/>
<path d="M654,108 H660 L656.8,111.2 H660 L652,119.5 L653.5,113.8 H651.2 Z" fill="url(#bolt)" stroke="#a98a24" stroke-width="0.6"/>
<circle cx="658.6" cy="117.2" r="4.5" fill="#5a8fd8" stroke="#3d70b8" stroke-width="0.5"/>
<path d="M656.4,117.2 L658,118.8 L661,115.7" stroke="#fff" stroke-width="1.3" fill="none"/>
<!-- combo -->
<rect x="679" y="104.5" width="121" height="20.5" fill="#fff"/>
<rect x="788.5" y="104.5" width="11.5" height="20.5" fill="#f6f6f6"/>
<polygon points="790.8,113.6 796.4,113.6 793.6,116.5" fill="#111"/>
<!-- star -->
<polygon points="820.4,108 822.2,112.6 827.6,112.8 823.4,116 825,121.2 820.4,118.2 815.8,121.2 817.4,116 813.2,112.8 818.6,112.6" fill="#f2c230" stroke="#c7901a" stroke-width="0.7"/>
<path d="M824.6,116 H827.4 V118.6 H830 V121.4 H827.4 V124 H824.6 V121.4 H822 V118.6 H824.6 Z" fill="#b7e69a" stroke="#5a9e2e" stroke-width="1.1"/>
<!-- broom -->
<ellipse cx="854" cy="122.4" rx="8" ry="1.3" fill="url(#sh)"/>
<path d="M858.6,111.2 L861.8,108 L862.8,109 L859.6,112.2 Z" fill="#8a5a2a"/>
<path d="M846,114.5 Q852,111 858.2,110.8 Q860.2,112.8 859.7,114.2 Q856,119.5 853.3,121.2 Q851.5,117.5 846,114.5 Z" fill="#d9bc7a" stroke="#9c7b3c" stroke-width="0.7"/>
<path d="M848.5,114.2 L855,119.6 M850.5,113 L856.7,118 M853,112 L858.2,116 M855.4,111.3 L859.2,114.2" stroke="#a88645" stroke-width="0.7"/>
<!-- partial -->
<circle cx="878" cy="114" r="6" fill="#3a3a3a"/>
</svg>
<div class="a" style="left:683px;top:109px;font-size:11px;color:#111;line-height:13px;letter-spacing:-0.35px;transform:scaleY(1.08);transform-origin:0 0">Limit to 5000 rows</div>


<!-- editor -->
<div class="a" style="left:375px;top:128px;width:499px;height:323px;background:#fff"></div>
<div class="a mono" style="left:400px;top:134px;color:#2b80b9">1</div>
<div class="a mono" style="left:400px;top:155px;color:#2b80b9">2</div>
<div class="a" style="left:415px;top:156px;width:6.6px;height:6.6px;border-radius:50%;background:#0a84ff"></div>
<div class="a mono" style="left:452px;top:155px;color:#111"><span style="color:#0e7bc6">OPTIMIZE TABLE</span> wp_options;</div>

<!-- frame border -->
<div class="a" style="left:0;top:0;width:875px;height:1px;background:#000"></div>
<div class="a" style="left:0;top:451px;width:875px;height:1px;background:#000"></div>
<div class="a" style="left:0;top:0;width:1px;height:452px;background:#000"></div>
<div class="a" style="left:874px;top:0;width:1px;height:452px;background:#000"></div>
</body></html>
